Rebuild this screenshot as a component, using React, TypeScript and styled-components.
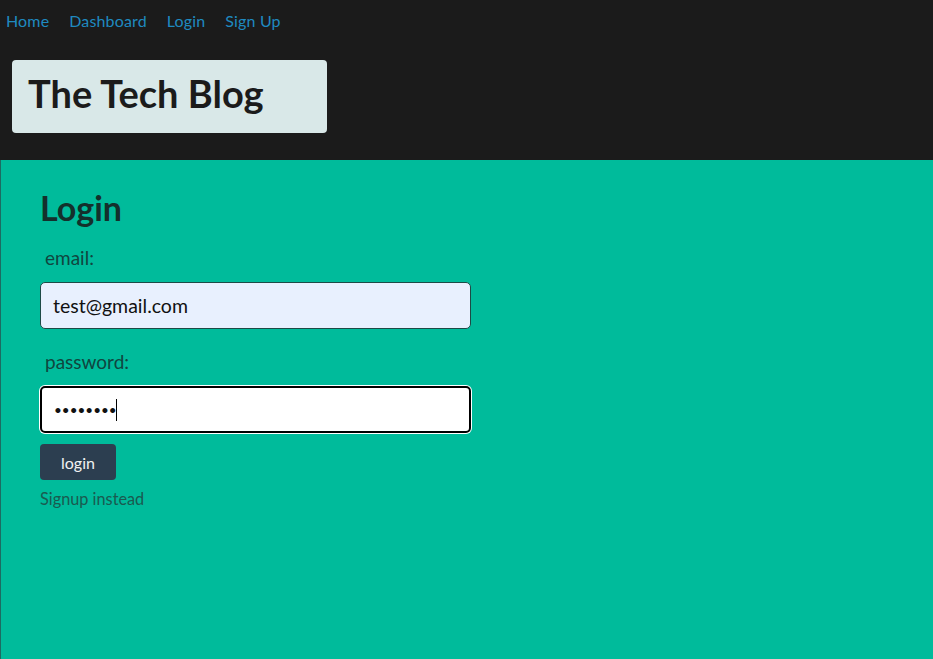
import React from "react";
import styled, { createGlobalStyle } from "styled-components";

const Global = createGlobalStyle`
  html, body { margin: 0; padding: 0; background: #00bb9b; }
  body { font-family: "Lato", "Open Sans", sans-serif; }
  * { box-sizing: border-box; }
`;

const Page = styled.div`
  min-height: 659px;
  display: flex;
  flex-direction: column;
`;

const Header = styled.header`
  background: #1b1b1b;
  height: 160px;
  display: flex;
  flex-direction: column;
`;

const Nav = styled.nav`
  display: flex;
  gap: 20px;
  padding: 11px 6px 0;
  height: 60px;
`;

const NavLink = styled.a`
  color: #1f8ac0;
  font-size: 16px;
  letter-spacing: 0.15px;
  text-decoration: none;
  line-height: 20px;
`;

const TitleBox = styled.div`
  margin-left: 12px;
  width: 315px;
  height: 73px;
  background: #d9e8e8;
  border-radius: 4px;
  display: flex;
  align-items: center;
  padding: 0 0 7px 16px;
`;

const Title = styled.h1`
  margin: 0;
  font-size: 38px;
  font-weight: 700;
  color: #1b1b1b;
`;

const Main = styled.main`
  flex: 1;
  background: #00bb9b;
  border-left: 1px solid #1d6b62;
  padding: 28px 39px;
`;

const Form = styled.form`
  width: 431px;
  display: flex;
  flex-direction: column;
  align-items: flex-start;
`;

const Heading = styled.h2`
  margin: 0 0 18px;
  font-size: 34px;
  font-weight: 700;
  color: #14302c;
  line-height: 40px;
`;

const Label = styled.label`
  font-size: 19px;
  color: #10463f;
  padding-left: 5px;
  line-height: 24px;
  margin-bottom: 12px;
`;

const Field = styled.div`
  position: relative;
  margin-bottom: 21px;
`;

const Input = styled.input<{ $focused?: boolean }>`
  display: block;
  width: 431px;
  height: 47px;
  border-radius: 5px;
  font-family: inherit;
  font-size: ${(p) => (p.$focused ? "13.5px" : "19.5px")};
  padding: 0 12px;
  color: #111;
  background: ${(p) => (p.$focused ? "#ffffff" : "#e8f0fe")};
  border: ${(p) => (p.$focused ? "2px solid #000" : "1px solid #1d4a46")};
  box-shadow: ${(p) => (p.$focused ? "0 0 0 1px #ffffff" : "none")};
  outline: none;
`;

const Caret = styled.span`
  position: absolute;
  left: 76px;
  top: 13px;
  width: 1px;
  height: 22px;
  background: #000;
`;

const Button = styled.button`
  background: #2c3e50;
  color: #f2f2f2;
  border: none;
  border-radius: 4px;
  width: 76px;
  height: 36px;
  font-family: inherit;
  font-size: 16px;
  margin-top: -10px;
  margin-bottom: 9px;
`;

const Switch = styled.a`
  font-size: 16.3px;
  color: #1a5a50;
  text-decoration: none;
  line-height: 20px;
`;

export default function App() {
  return (
    <Page>
      <Global />
      <Header>
        <Nav>
          <NavLink href="#">Home</NavLink>
          <NavLink href="#">Dashboard</NavLink>
          <NavLink href="#">Login</NavLink>
          <NavLink href="#">Sign Up</NavLink>
        </Nav>
        <TitleBox>
          <Title>The Tech Blog</Title>
        </TitleBox>
      </Header>
      <Main>
        <Form onSubmit={(e) => e.preventDefault()}>
          <Heading>Login</Heading>
          <Label htmlFor="email">email:</Label>
          <Field>
            <Input id="email" type="text" defaultValue="test@gmail.com" readOnly />
          </Field>
          <Label htmlFor="password">password:</Label>
          <Field>
            <Input id="password" $focused type="password" defaultValue="password" readOnly />
            <Caret />
          </Field>
          <Button type="submit">login</Button>
          <Switch href="#">Signup instead</Switch>
        </Form>
      </Main>
    </Page>
  );
}
